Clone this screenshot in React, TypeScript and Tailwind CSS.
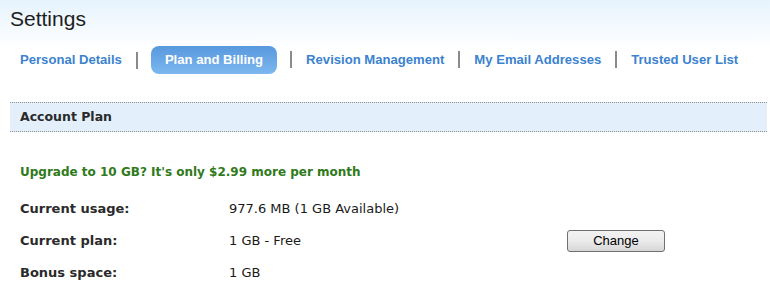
const tabs = [
  "Personal Details",
  "Plan and Billing",
  "Revision Management",
  "My Email Addresses",
  "Trusted User List",
];

const rows = [
  { label: "Current usage:", value: "977.6 MB (1 GB Available)" },
  { label: "Current plan:", value: "1 GB - Free", action: "Change" },
  { label: "Bonus space:", value: "1 GB" },
];

export default function App() {
  return (
    <div className="w-[770px] h-[299px] overflow-hidden bg-white font-['Liberation_Sans',Arial,sans-serif]">
      <div className="bg-gradient-to-b from-[#e6f3fd] to-white h-[50px] px-[10px] pt-[6px]">
        <h1 className="text-[21px] leading-[26px] text-[#1e1e1e]">Settings</h1>
      </div>

      {/* Tabs */}
      <ul className="flex items-center -mt-[4px] pl-[19px] h-[28px]">
        {tabs.map((tab, i) => {
          const isActive = tab === "Plan and Billing";
          return (
            <li key={tab} className="flex items-center">
              {i > 0 && <span className="w-[2px] h-[17px] bg-[#8a8a8a] mx-[13px]" />}
              <span
                className={
                  isActive
                    ? "h-[28px] px-[14px] flex items-center rounded-[8px] bg-gradient-to-b from-[#5898de] to-[#7cb7ee] text-white text-[13.1px] font-bold"
                    : "px-[1px] text-[13.1px] font-bold text-[#3b82cf]"
                }
              >
                {tab}
              </span>
            </li>
          );
        })}
      </ul>

      {/* Account plan */}
      <div className="ml-[10px] mr-[3px] mt-[28px] border-y border-dotted border-[#8f8f8f] bg-[#e3f0fb] h-[30px] flex items-center px-[10px]">
        <span className="font-['DejaVu_Sans',Verdana,sans-serif] font-bold text-[12.5px] text-[#2a2a2a]">Account Plan</span>
      </div>

      <div className="px-[20px] pt-[32px] font-['DejaVu_Sans',Verdana,sans-serif]">
        <p className="text-[12px] font-bold text-[#2f7a1a] leading-[16px]">
          Upgrade to 10 GB? It's only $2.99 more per month
        </p>
        <div className="mt-[13px] flex flex-col">
          {rows.map((row) => (
            <div key={row.label} className="flex items-center h-[32px]">
              <span className="w-[209px] text-[13px] font-bold text-[#2a2a2a]">{row.label}</span>
              <span className="w-[338px] text-[13px] text-[#1a1a1a]">{row.value}</span>
              {row.action && (
                <button className="w-[98px] h-[22px] rounded-[3px] border border-[#707070] bg-gradient-to-b from-[#f2f2f2] via-[#ebebeb] to-[#d6d6d6] text-[13px] text-black font-['Liberation_Sans',Arial,sans-serif]">
                  {row.action}
                </button>
              )}
            </div>
          ))}
        </div>
      </div>
    </div>
  );
}
